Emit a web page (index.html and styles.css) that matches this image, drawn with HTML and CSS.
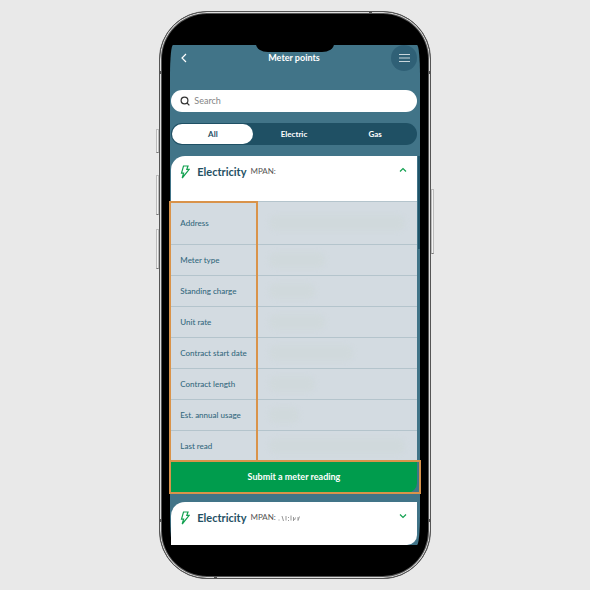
FILE: index.html
```html
<!DOCTYPE html>
<html lang="en">
<head>
    <meta charset="UTF-8">
    <meta name="viewport" content="width=device-width, initial-scale=1.0">
    <title>Meter points</title>
    <link rel="stylesheet" href="styles.css">
</head>
<body>
    <div class="phone">
        <!-- Hardware buttons and antenna bands -->
        <span class="side side-mute"></span>
        <span class="side side-up"></span>
        <span class="side side-down"></span>
        <span class="side side-power"></span>
        <span class="band band-top"></span>
        <span class="band band-bottom"></span>
        <span class="band band-left"></span>
        <span class="band band-right"></span>
        <span class="band band-left low"></span>
        <span class="band band-right low"></span>

        <main class="screen">
            <div class="notch"></div>
            <div class="scrollbar"></div>

            <header class="topbar">
                <button class="back" aria-label="Back">
                    <svg viewBox="0 0 8 10" width="8" height="10"><path d="M6 1 2 5l4 4"/></svg>
                </button>
                <h1>Meter points</h1>
                <button class="menu" aria-label="Menu">
                    <svg viewBox="0 0 12 10" width="12" height="10"><path d="M1 1.5h11M1 5h11M1 8.5h11"/></svg>
                </button>
            </header>

            <label class="search">
                <svg viewBox="0 0 10 10" width="10" height="10"><circle cx="4.5" cy="4.5" r="3.4"/><path d="m7 7 2.4 2.4"/></svg>
                <input type="search" placeholder="Search" aria-label="Search">
            </label>

            <nav class="tabs">
                <button class="tab active">All</button>
                <button class="tab">Electric</button>
                <button class="tab">Gas</button>
            </nav>

            <section class="card">
                <div class="card-header">
                    <svg class="bolt" viewBox="0 0 10 14" width="10" height="14"><path d="M3.500 1h4.500L6.800 4.400h2.400L2.200 13l1.400-4.800H1.500z"/></svg>
                    <h2>Electricity</h2>
                    <span class="mpan">MPAN:</span>
                    <button class="toggle" aria-label="Collapse">
                        <svg viewBox="0 0 8 6" width="8" height="6"><path d="m1 4.500 3-3 3 3"/></svg>
                    </button>
                </div>
                <div class="details">
                    <table>
                        <tr class="tall"><th scope="row">Address</th><td><span class="smudge wide"></span></td></tr>
                        <tr><th scope="row">Meter type</th><td><span class="smudge"></span></td></tr>
                        <tr><th scope="row">Standing charge</th><td><span class="smudge short"></span></td></tr>
                        <tr><th scope="row">Unit rate</th><td><span class="smudge"></span></td></tr>
                        <tr><th scope="row">Contract start date</th><td><span class="smudge long"></span></td></tr>
                        <tr><th scope="row">Contract length</th><td><span class="smudge short"></span></td></tr>
                        <tr><th scope="row">Est. annual usage</th><td><span class="smudge tiny"></span></td></tr>
                        <tr><th scope="row">Last read</th><td><span class="smudge wide"></span></td></tr>
                    </table>
                    <div class="highlight"></div>
                </div>
                <div class="action">
                    <button class="submit">Submit a meter reading</button>
                    <div class="highlight"></div>
                </div>
            </section>

            <section class="card">
                <div class="card-header">
                    <svg class="bolt" viewBox="0 0 10 14" width="10" height="14"><path d="M3.500 1h4.500L6.800 4.400h2.400L2.200 13l1.400-4.800H1.500z"/></svg>
                    <h2>Electricity</h2>
                    <span class="mpan">MPAN:</span>
                    <svg class="erased" viewBox="0 0 24 8" width="24" height="8"><path d="M1 5.500v1M4 2l1.500 5M8 2v4.500M10.500 3v1M10.500 6v1M13 1.500v5M15.500 3v4M17.500 3.500 16.500 6M20 3v3.500l1.500-4"/></svg>
                    <button class="toggle" aria-label="Expand">
                        <svg viewBox="0 0 8 6" width="8" height="6"><path d="m1 1.500 3 3 3-3"/></svg>
                    </button>
                </div>
            </section>
        </main>
    </div>
</body>
</html>
```
FILE: styles.css
```css
* {
    margin: 0;
    padding: 0;
    box-sizing: border-box;
}

body {
    display: flex;
    justify-content: center;
    align-items: center;
    min-height: 100vh;
    background-color: #e9e9e9;
    color: #1f5064;
    font-family: Lato, Roboto, sans-serif;
    font-size: 8px;
    line-height: 12px;
}

button {
    border: none;
    background: none;
    color: inherit;
    font: inherit;
    cursor: pointer;
}

svg {
    display: block;
    flex: none;
    fill: none;
    stroke: currentColor;
    stroke-width: 1.2;
}

/* Phone body */
.phone {
    position: relative;
    width: 46%;
    min-width: 270px;
    padding: 33px 10px;
    background-color: #000;
    border: 1px solid #555;
    border-radius: 48px;
    box-shadow: inset 0 0 0 1px #ddd, inset 0 0 0 2px #555;
}

.side {
    position: absolute;
    left: -4px;
    width: 3px;
    background-color: #f3f3f3;
    border: 1px solid #bbb;
    border-bottom-color: #777;
}

.side-mute {
    top: 117px;
    height: 24px;
}

.side-up {
    top: 163px;
    height: 40px;
}

.side-down {
    top: 217px;
    height: 40px;
}

.side-power {
    top: 177px;
    left: auto;
    right: -4px;
    height: 65px;
}

.band {
    position: absolute;
    width: 3px;
    height: 3px;
    background-color: #555;
}

.band-top {
    top: -1px;
    right: 58px;
}

.band-bottom {
    bottom: -1px;
    left: 54px;
}

.band-left {
    top: 59px;
    left: -1px;
}

.band-right {
    top: 59px;
    right: -1px;
}

.low {
    top: auto;
    bottom: 56px;
}

/* Screen */
.screen {
    position: relative;
    padding: 0 3px 0 1px;
    background-color: #417488;
    border-radius: 3px / 30px;
}

.notch {
    position: absolute;
    top: -1px;
    left: 50%;
    width: 78px;
    height: 8px;
    margin-left: -39px;
    background-color: #000;
    border-radius: 0 0 12px 12px / 0 0 8px 8px;
}

.scrollbar {
    position: absolute;
    top: 111px;
    right: 0;
    width: 2px;
    height: 93px;
    background-color: #1f5368;
}

.topbar {
    display: flex;
    justify-content: space-between;
    align-items: center;
    height: 26px;
    color: #fff;
}

.topbar h1 {
    font-size: 9px;
    font-weight: 700;
}

.back,
.menu {
    display: flex;
    justify-content: center;
    align-items: center;
    width: 26px;
    height: 26px;
    border-radius: 50%;
}

.menu {
    background-color: #2f6076;
    color: #c9d6dc;
}

.search {
    display: flex;
    align-items: center;
    gap: 4px;
    height: 22px;
    margin-top: 19px;
    padding: 0 9px;
    background-color: #fff;
    border-radius: 11px;
    color: #333;
}

.search input {
    flex: 1;
    min-width: 0;
    border: none;
    outline: none;
    background: none;
    font: inherit;
    font-size: 9px;
}

.search input::placeholder {
    color: #858585;
}

.tabs {
    display: grid;
    grid-template-columns: repeat(3, 1fr);
    height: 22px;
    margin-top: 11px;
    padding: 1px;
    background-color: #1f5064;
    border-radius: 11px;
}

.tab {
    border-radius: 10px;
    color: #fff;
    font-weight: 700;
}

.tab.active {
    background-color: #fff;
    color: #1f5064;
}

/* Meter cards */
.card {
    margin-top: 11px;
    background-color: #fff;
    border-radius: 14px 0 10px 0;
}

.card + .card {
    margin-top: 9px;
}

.card-header {
    display: flex;
    align-items: flex-start;
    height: 45px;
    padding: 9px 9px 0;
}

.card + .card .card-header {
    height: 43px;
}

.bolt {
    color: #12a150;
}

.card-header h2 {
    margin: 1px 4px 0 7px;
    font-size: 11px;
    font-weight: 700;
}

.mpan {
    color: #555;
}

.erased {
    margin: 3px 0 0 2px;
    color: #999;
    stroke-width: 1;
}

.toggle {
    margin-left: auto;
    padding: 2px 1px;
    color: #12a150;
}

.details,
.action {
    position: relative;
}

.details table {
    width: 100%;
    border-collapse: collapse;
    background-color: #d3dbe1;
}

.details tr {
    height: 31px;
    border-top: 1px solid #b4c4cc;
}

.details .tall {
    height: 43px;
}

.details th {
    width: 35%;
    padding-left: 9px;
    color: #34697e;
    font-weight: 500;
    text-align: left;
}

.details td {
    padding-left: 12px;
}

.smudge {
    display: block;
    width: 56px;
    height: 16px;
    background-color: #d0d9dc;
    border-radius: 8px;
    filter: blur(2px);
}

.smudge.tiny {
    width: 30px;
}

.smudge.short {
    width: 46px;
}

.smudge.long {
    width: 84px;
}

.smudge.wide {
    width: 92%;
}

.submit {
    display: block;
    width: 100%;
    height: 32px;
    background-color: #009c4d;
    border-radius: 0 0 10px 0;
    color: #fff;
    font-size: 9px;
    font-weight: 700;
}

.action {
    background-color: #417488;
}

.highlight {
    position: absolute;
    top: 0;
    bottom: -1px;
    left: -2px;
    width: 36%;
    border: 2px solid #d9934a;
}

.action .highlight {
    top: -1px;
    right: -4px;
    width: auto;
}
```
